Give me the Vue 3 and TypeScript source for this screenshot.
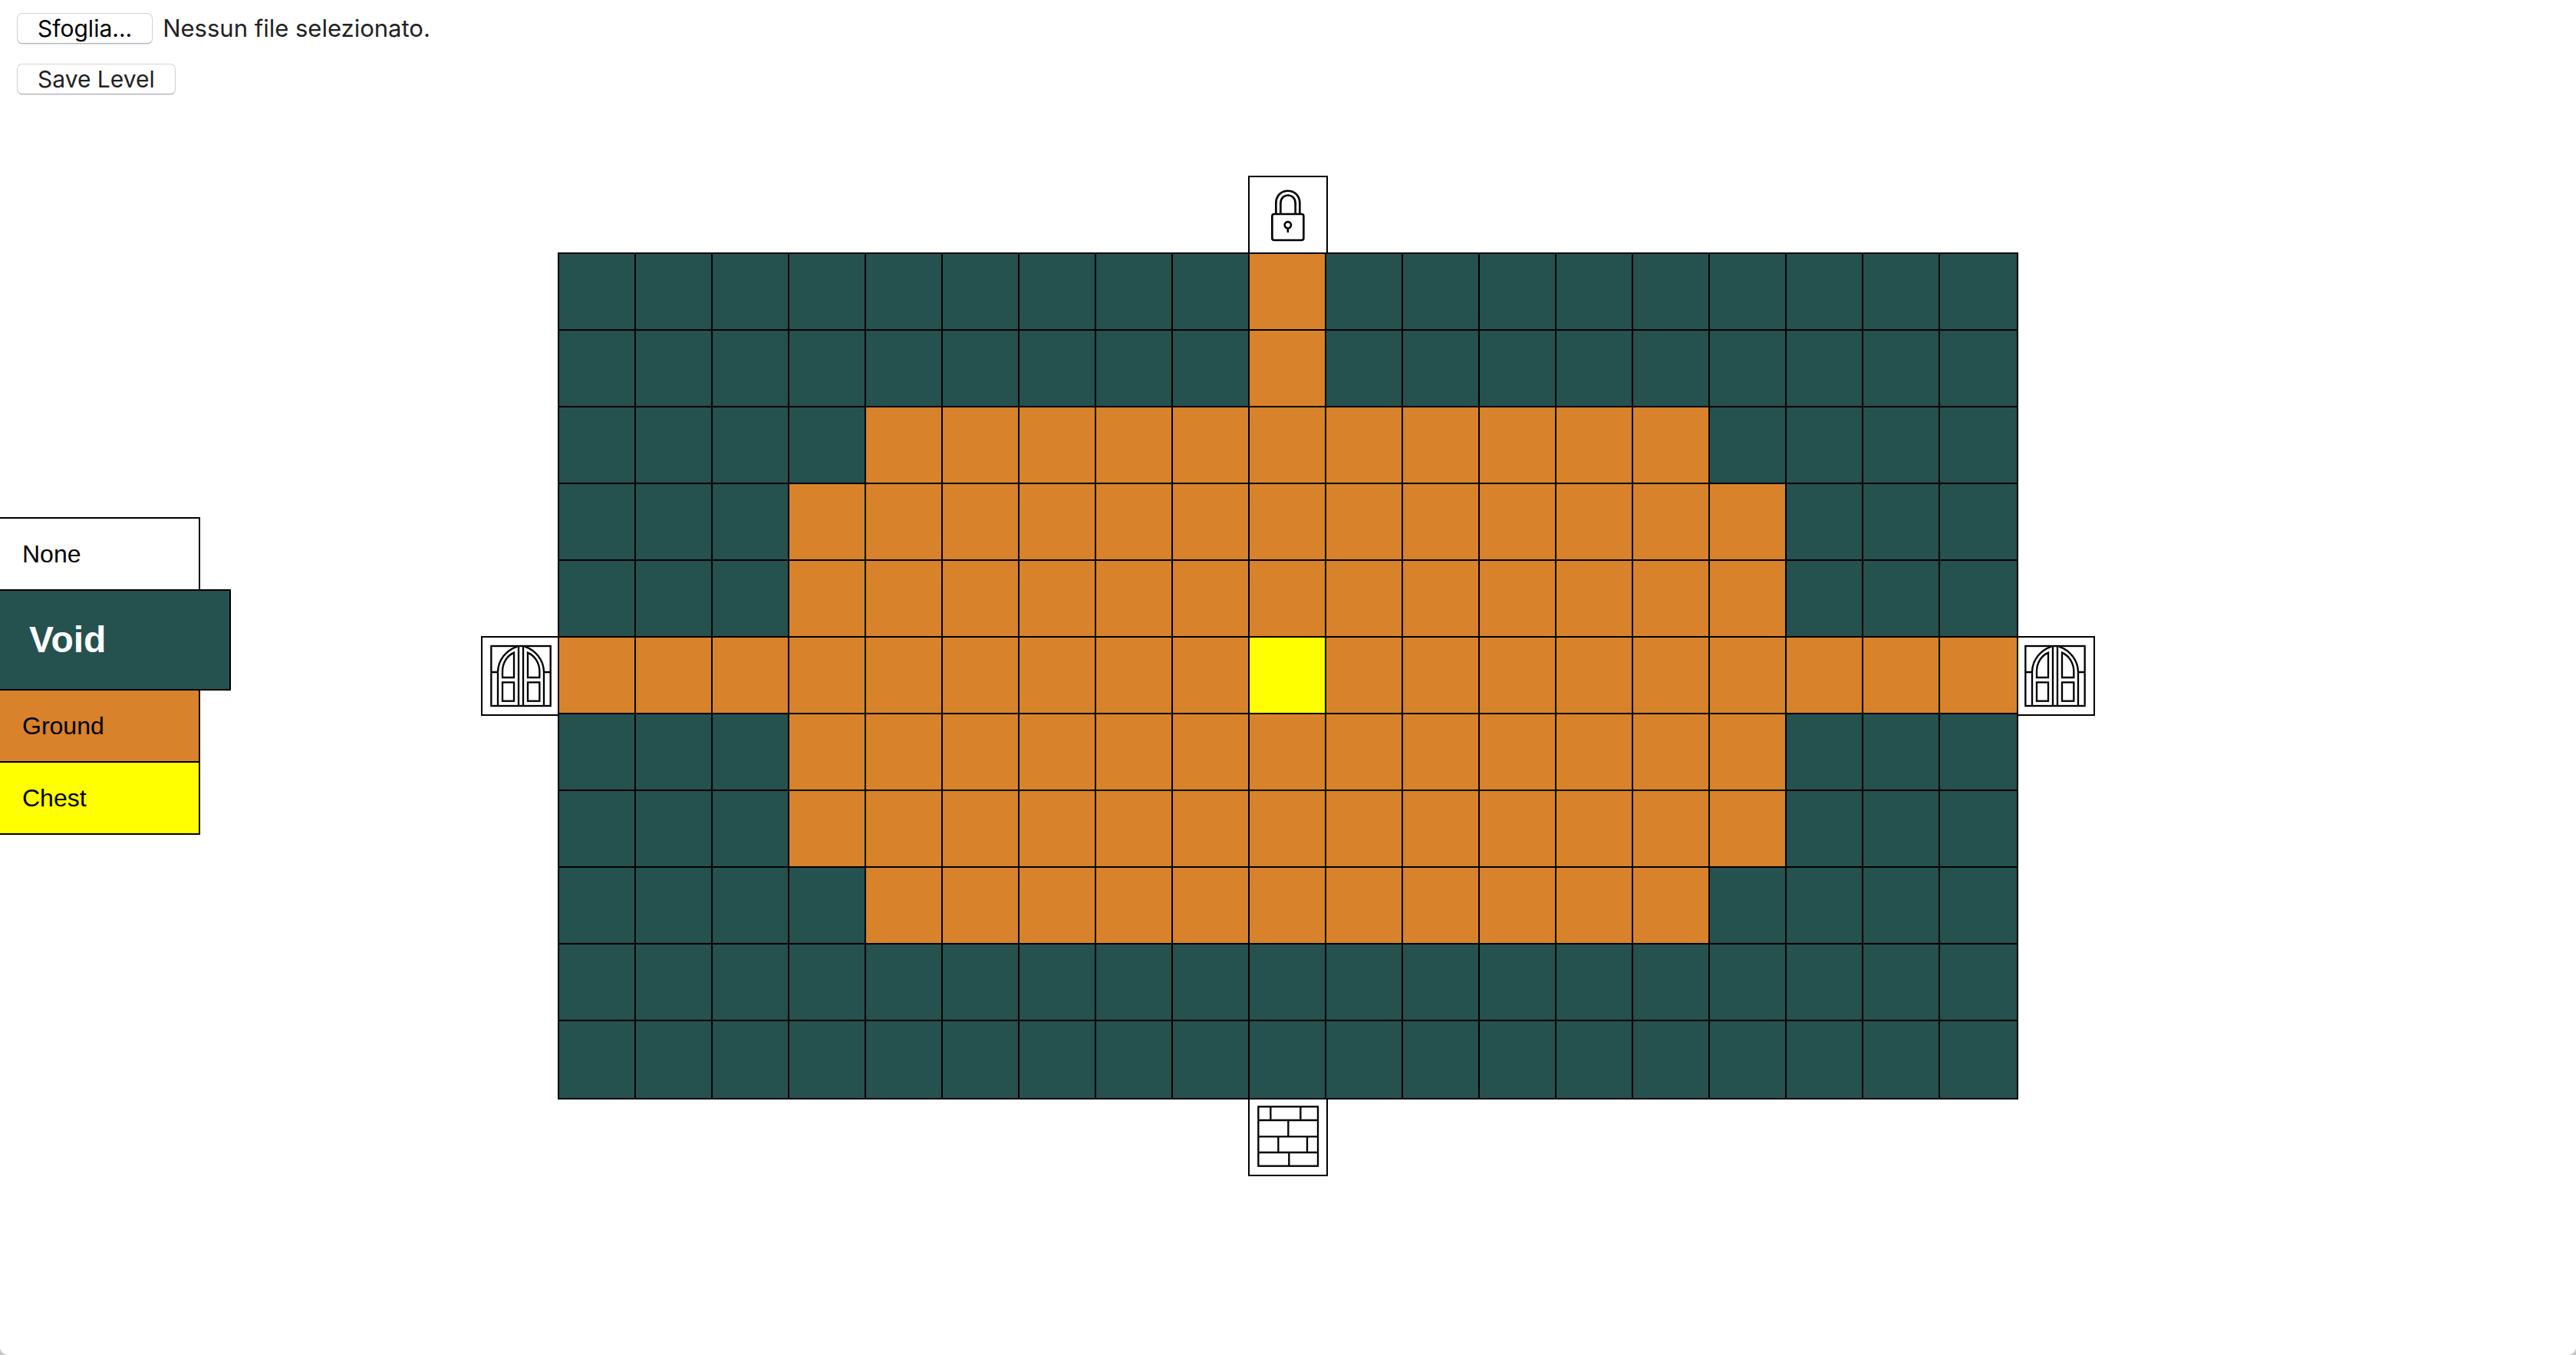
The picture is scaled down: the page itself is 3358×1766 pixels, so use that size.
<script setup lang="ts">
import { ref } from 'vue'

type Tile = 'none' | 'void' | 'ground' | 'chest'
type Exit = 'lock' | 'door' | 'wall'

const palette: { id: Tile; label: string }[] = [
  { id: 'none', label: 'None' },
  { id: 'void', label: 'Void' },
  { id: 'ground', label: 'Ground' },
  { id: 'chest', label: 'Chest' },
]

const codes: Record<string, Tile> = { '.': 'none', V: 'void', G: 'ground', C: 'chest' }

const rows = ref<Tile[][]>(
  [
    'VVVVVVVVVGVVVVVVVVV',
    'VVVVVVVVVGVVVVVVVVV',
    'VVVVGGGGGGGGGGGVVVV',
    'VVVGGGGGGGGGGGGGVVV',
    'VVVGGGGGGGGGGGGGVVV',
    'GGGGGGGGGCGGGGGGGGG',
    'VVVGGGGGGGGGGGGGVVV',
    'VVVGGGGGGGGGGGGGVVV',
    'VVVVGGGGGGGGGGGVVVV',
    'VVVVVVVVVVVVVVVVVVV',
    'VVVVVVVVVVVVVVVVVVV',
  ].map((line) => [...line].map((c) => codes[c])),
)

const exits = ref<{ side: string; kind: Exit }[]>([
  { side: 'north', kind: 'lock' },
  { side: 'west', kind: 'door' },
  { side: 'east', kind: 'door' },
  { side: 'south', kind: 'wall' },
])

const kinds: Exit[] = ['wall', 'door', 'lock']
const selected = ref<Tile>('void')
const fileName = ref('Nessun file selezionato.')
const fileInput = ref<HTMLInputElement | null>(null)

function paint(r: number, c: number) {
  rows.value[r][c] = selected.value
}

function cycle(i: number) {
  const exit = exits.value[i]
  exit.kind = kinds[(kinds.indexOf(exit.kind) + 1) % kinds.length]
}

function onFile(e: Event) {
  const file = (e.target as HTMLInputElement).files?.[0]
  if (file) fileName.value = file.name
}

function save() {
  const blob = new Blob([JSON.stringify({ rows: rows.value, exits: exits.value })])
  const link = document.createElement('a')
  link.href = URL.createObjectURL(blob)
  link.download = 'level.json'
  link.click()
}
</script>

<template>
  <main class="page">
    <header class="toolbar">
      <div class="file">
        <button type="button" class="push" @click="fileInput?.click()">Sfoglia...</button>
        <label for="level-file">{{ fileName }}</label>
        <input id="level-file" ref="fileInput" class="file-input" type="file" @change="onFile" />
      </div>
      <button type="button" class="push" @click="save">Save Level</button>
    </header>

    <nav class="palette">
      <button
        v-for="t in palette"
        :key="t.id"
        type="button"
        class="swatch"
        :class="[t.id, { active: selected === t.id }]"
        :aria-pressed="selected === t.id"
        @click="selected = t.id"
      >
        {{ t.label }}
      </button>
    </nav>

    <section class="board">
      <div class="tiles">
        <template v-for="(row, r) in rows" :key="r">
          <button
            v-for="(tile, c) in row"
            :key="c"
            type="button"
            class="tile"
            :class="tile"
            :aria-label="tile"
            @click="paint(r, c)"
          ></button>
        </template>
      </div>

      <button
        v-for="(exit, i) in exits"
        :key="exit.side"
        type="button"
        class="tile exit"
        :class="exit.side"
        :aria-label="exit.kind"
        @click="cycle(i)"
      >
        <svg v-if="exit.kind === 'lock'" viewBox="57 33 300 300" class="icon">
          <g stroke-width="8">
            <rect x="145" y="177" width="123" height="102" rx="8" />
            <path d="M160 177V135C160 70 253 70 253 135V177" />
            <path d="M178 177V135C178 93 236 93 236 135V177" />
            <circle cx="206.500" cy="220" r="12.500" />
            <path d="M206.500 233V246" stroke-linecap="round" />
          </g>
        </svg>
        <svg v-else-if="exit.kind === 'door'" viewBox="42 48 300 300" class="icon">
          <g stroke-width="7">
            <rect x="76" y="81" width="232" height="234" />
            <path d="M102 315V183C102 135 136 97 178 83M282 315V183C282 135 248 97 207 83" />
            <path d="M183 81V315M201 81V315" />
            <path d="M76 183H102M282 183H308" />
            <path d="M165 107V204H120V180C120 148 137 119 165 107Z" />
            <path d="M219 107V204H265V180C265 148 247 119 219 107Z" />
            <rect x="120" y="223" width="45" height="73" />
            <rect x="219" y="223" width="46" height="73" />
          </g>
        </svg>
        <svg v-else viewBox="57 33 300 300" class="icon">
          <g stroke-width="7">
            <rect x="91" y="67" width="233" height="232" />
            <path d="M91 120H324M91 184H324M91 246H324" />
            <path d="M139 67V120M256 67V120M208 120V184M169 184V246M282 184V246M211 246V299" />
          </g>
        </svg>
      </button>
    </section>
  </main>
</template>

<style>
body {
  margin: 0;
  background: #c4c4c4;
}
</style>

<style scoped>
.page {
  box-sizing: border-box;
  min-height: 100vh;
  display: grid;
  grid-template-columns: 1fr auto 1fr;
  grid-template-rows: 1fr auto 1fr;
  align-items: center;
  padding-bottom: 4px;
  background: #fff;
  border-radius: 0 0 10px 10px;
  color: #000;
  font: 32px/36px "Liberation Sans", Arial, sans-serif;
}

button {
  margin: 0;
  font: inherit;
  color: inherit;
  box-sizing: border-box;
}

.toolbar {
  grid-column: 1 / -1;
  align-self: start;
  display: flex;
  flex-direction: column;
  align-items: flex-start;
  gap: 26px;
  padding: 17px 22px 0;
  color: #222;
  font-family: Inter, sans-serif;
  font-size: 31px;
}

.file {
  display: flex;
  align-items: center;
  gap: 13px;
}

.file .push {
  color: #000;
}

.file-input {
  position: absolute;
  width: 1px;
  height: 1px;
  opacity: 0;
  pointer-events: none;
}

.push {
  height: 40px;
  padding: 0 26px;
  font-size: 30px;
  border: 1px solid #d4d4d4;
  border-bottom-color: #b4b4b4;
  border-radius: 7px;
  background: #fff;
  box-shadow: 0 1px 1px #ddd;
}

.palette {
  grid-column: 1;
  display: flex;
  flex-direction: column;
  align-items: flex-start;
}

.swatch {
  width: 261px;
  height: 96px;
  padding: 0 29px;
  border: solid #000;
  border-width: 2px 2px 2px 0;
  text-align: left;
}

.swatch + .swatch {
  margin-top: -2px;
}

.swatch.active {
  z-index: 1;
  width: 301px;
  height: 132px;
  padding: 0 38px;
  font-size: 48px;
  font-weight: bold;
}

.board {
  display: grid;
  grid-template-columns: 100px auto 100px;
  grid-template-rows: 100px auto 100px;
  place-items: center;
}

.tiles {
  grid-area: 2 / 2;
  z-index: 1;
  display: grid;
  grid-template-columns: repeat(19, 100px);
  grid-auto-rows: 100px;
  padding: 0 4px 4px 0;
}

.tile {
  width: 104px;
  height: 104px;
  padding: 0;
  border: 2px solid #000;
}

.exit {
  background: #fff;
}

.north {
  grid-area: 1 / 2;
  align-self: start;
}

.west {
  grid-area: 2 / 1;
  justify-self: start;
}

.east {
  grid-area: 2 / 3;
  justify-self: end;
}

.south {
  grid-area: 3 / 2;
  align-self: end;
}

.icon {
  display: block;
  width: 100%;
  height: 100%;
  fill: none;
  stroke: #000;
}

.none {
  background: #fff;
}

.void {
  background: #25514f;
}

.void.active {
  color: #fff;
}

.ground {
  background: #d8822b;
}

.chest {
  background: #ff0;
}
</style>
